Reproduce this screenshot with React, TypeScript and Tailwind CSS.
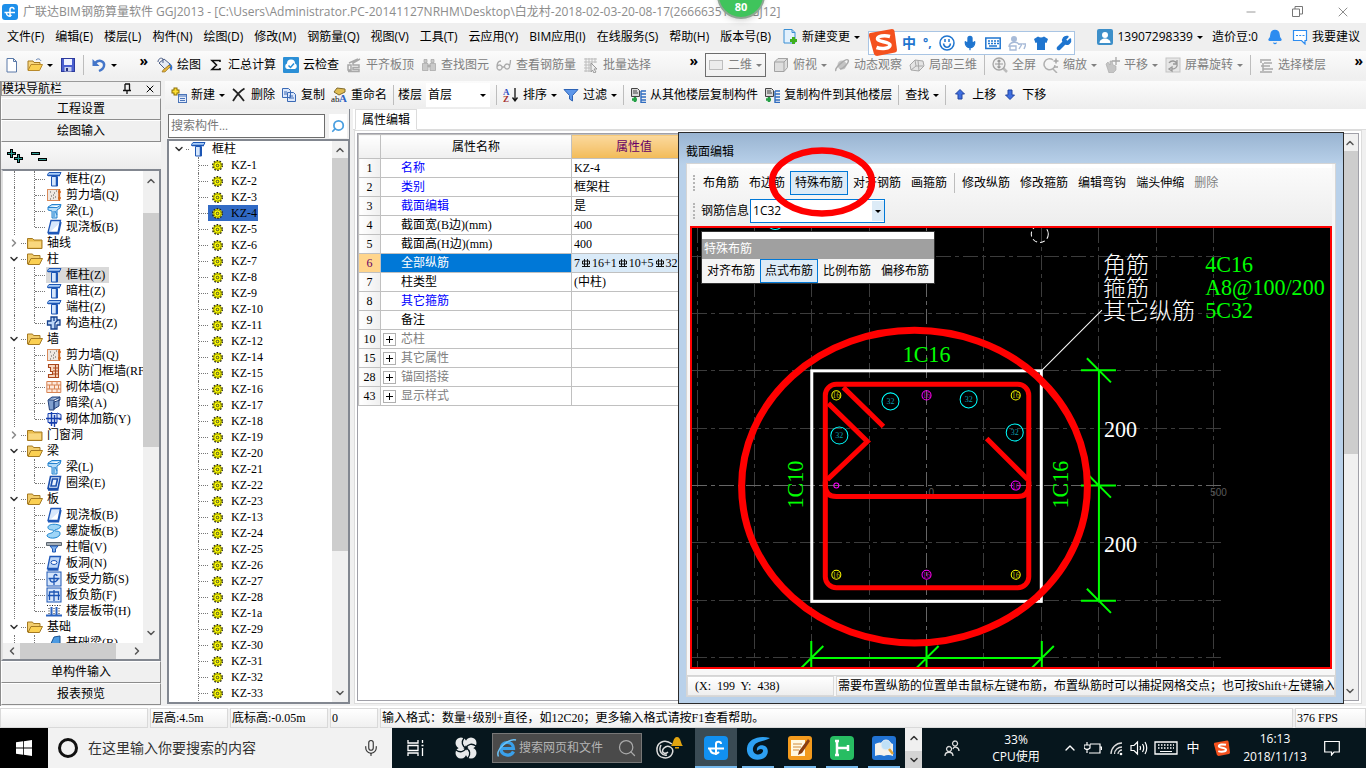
import { useState } from 'react';
import type { ReactNode } from 'react';
import { Bell, ChevronDown, ChevronLeft, ChevronRight, ChevronUp, Mic, Minus, Search, Wrench, X } from 'lucide-react';

const SONG = "font-['Liberation_Serif','Noto_Sans_CJK_SC',serif]";

// 16x16 图标
const icons: Record<string, ReactNode> = {
  logo: (
    <>
      <rect width="16" height="16" rx="3" fill="#1d8fea" />
      <path d="M8 13V5.500a2 2 0 0 1 4 0M2.500 8.500h10.500M4.500 9c0 3 3 4 5 2" fill="none" stroke="#fff" strokeWidth="1.500" />
    </>
  ),
  file: <path d="M3 1.500h6.500l3 3V15H3zM9.500 1.500v3h3" fill="#fff" stroke="#5a79a8" />,
  fileAdd: (
    <>
      <path d="M2 .5h8l3 3V14H2zM10 .5v3h3" fill="#e3f1fd" stroke="#3b8fd4" />
      <path d="M8 11.500h7M11.500 8v7" stroke="#3faf1d" strokeWidth="3" />
    </>
  ),
  open: (
    <>
      <path d="M1 13V4h5l1 1.500h6V8" fill="#f9d77e" stroke="#a57a22" />
      <path d="M1 13.500 4 7.500h11.500l-3 6z" fill="#fbd052" stroke="#b98a2b" />
      <path d="M9 3c2-2 4-1 5 1" fill="none" stroke="#5f7fae" />
    </>
  ),
  save: (
    <>
      <rect x="1.500" y="1.500" width="13" height="13" fill="#4a5fd0" stroke="#2c3a9c" />
      <rect x="4" y="2" width="8" height="6" fill="#eef1ff" />
      <rect x="4.500" y="10" width="7" height="4.500" fill="#c8cfee" />
      <rect x="6" y="11" width="2" height="3" fill="#26327f" />
    </>
  ),
  undo: (
    <>
      <path d="M4 6c5-4.500 10-1 9 3-.5 2.500-2.500 4-5 5" fill="none" stroke="#4476c9" strokeWidth="2.400" />
      <path d="M1.500 2v7h7z" fill="#4476c9" />
    </>
  ),
  paint: (
    <>
      <path d="m2 6 5-4 6 5-5 5z" fill="#e6ebf5" stroke="#4b5d87" />
      <path d="M1 5c0-3 3-5 5-3v4" fill="none" stroke="#4b5d87" />
      <path d="M12 6c4 2 4 5 2 8l-2-4z" fill="#2f6fd0" />
      <path d="m14 9-6 6H5l1-2 6-5z" fill="#e2b13a" stroke="#8c6a1c" strokeWidth=".6" />
    </>
  ),
  sigma: <path d="M12 5V3.500H4l4.500 4.500L4 12.500h8V11" fill="none" stroke="#111" strokeWidth="1.600" />,
  cloud: (
    <>
      <rect width="16" height="16" rx="1" fill="#2b8fd6" />
      <path d="M4 12a3 3 0 0 1 0-5.500 4 4 0 0 1 8 0A3 3 0 0 1 12 12z" fill="#fff" />
      <path d="m5.500 8.500 2 2 3.500-4" fill="none" stroke="#2b8fd6" strokeWidth="1.500" />
    </>
  ),
  align: <path d="M2 14.500h11v-2H7v-2h6V8H7V6l7-4M2 8h3v5H2zM3 6l9-4" fill="none" stroke="#a8a8a8" strokeWidth="1.500" />,
  binocular: (
    <path d="M3 2.500h3v3H3zM10 2.500h3v3h-3zM1.500 6.500h5.500v7H1.500zM9 6.500h5.500v7H9zM7 8h2v2H7z" fill="#c9c9c9" stroke="#a3a3a3" strokeWidth=".7" />
  ),
  glasses: (
    <path d="M11 7a2.500 2.500 0 1 0 .1 0M3.500 8a2.500 2.500 0 1 0 .1 0M1 10c0-4 1-6 4-6M6 10h3M13.500 9c1-3 1-4 1-6" fill="none" stroke="#a9a9a9" strokeWidth="1.300" />
  ),
  batch: (
    <>
      <path d="M1 2h13M1 5h13M1 8h7M1 11h6M1 14h6M3 1v14M6 1v14M9 1v6M12 1v5" stroke="#bdbdbd" />
      <path d="m8 6 6 6-3 0 2 3-2 1-1.500-3L8 15z" fill="#eee" stroke="#999" />
    </>
  ),
  rect: <rect x="1.500" y="3.500" width="13" height="9" fill="#ececec" stroke="#bdbdbd" />,
  cube: (
    <path d="M1.500 5 5 1.500h9.500v9L11 14.500H1.500zM1.500 5H11v9.500M11 5l3.500-3.500" fill="#dedede" stroke="#a3a3a3" />
  ),
  orbit: (
    <>
      <circle cx="8" cy="8" r="4.500" fill="#c4c4c4" />
      <path d="M2 14C0 11 12 1 14 3s-5 9-8 9" fill="none" stroke="#aaa" strokeWidth="1.500" />
    </>
  ),
  box3d: (
    <path d="m1 8 5-5 8 1 1 5-5 5-8-1zM6 3l1 6-5 4M7 9l7 0M9 3.500 10 14" fill="#e4e4e4" stroke="#a8a8a8" />
  ),
  full: (
    <>
      <path d="m11 11 4 4" stroke="#bbb" strokeWidth="2.500" />
      <circle cx="7" cy="7" r="6" fill="#f0f0f0" stroke="#a6a6a6" strokeWidth="1.300" />
      <path d="M7 3v8M3 7h8M5.500 4.500 7 3l1.500 1.500M5.500 9.500 7 11l1.500-1.500" fill="none" stroke="#999" strokeWidth="1.200" />
    </>
  ),
  zoom: (
    <>
      <path d="M10 3a5.500 5.500 0 1 0 2 5M10 12l4 4" fill="none" stroke="#b0b0b0" strokeWidth="1.500" />
      <path d="M10.500 4h5M13 1.500v5M11 10h4" stroke="#a6a6a6" strokeWidth="1.500" />
    </>
  ),
  pan: (
    <>
      <path d="M2 7l2-2 2 3 0-4 2 0 1 4 3 1v4l-3 3H5z" fill="#c4c4c4" stroke="#a8a8a8" strokeWidth=".6" />
      <path d="M12 0v8M8 4h8" stroke="#a6a6a6" strokeWidth="1.300" />
    </>
  ),
  rotate: (
    <>
      <rect x="1" y="1" width="14" height="14" fill="#e6e6e6" stroke="#c3c3c3" />
      <path d="M4 6a4.500 4.500 0 0 1 8 1c1 3-2 5-5 5M12 3v4H8M7 10v4l-3-2z" fill="none" stroke="#999" strokeWidth="1.300" />
    </>
  ),
  floors: <path d="M4 3h9M6 6h8M3 9h9M5 12h10M2 15h12M3 2v4M5 6v8" stroke="#a9a9a9" strokeWidth="1.500" />,
  create: (
    <>
      <path d="M.5 4.500h8M4.500 .5v8" stroke="#8a6d00" strokeWidth="4" />
      <path d="M1.500 4.500h6M4.500 1.500v6" stroke="#ffe034" strokeWidth="2" />
      <rect x="7.500" y="7.500" width="8" height="8" fill="#e4ecfb" stroke="#4a74b8" />
      <path d="M8 9h7M9 11.500h5M9 13.500h5" stroke="#4a74b8" />
    </>
  ),
  del: <path d="M2 2c4 3 8 8 11 12M13.500 1.500C9 4 5 9 2 14" fill="none" stroke="#222" strokeWidth="1.800" />,
  copy: (
    <path d="M1.500 1.500h6l2 2v7h-8zM6.500 5.500h6l2 2v7h-8zM3 5h3M3 7h3M8 9h4M8 11h5" fill="#dbe7fb" stroke="#3a69b4" />
  ),
  rename: (
    <>
      <path d="m3 5 3-4 8 1 0 3-6 3z" fill="#e0bd54" stroke="#806a2c" />
      <text x="0" y="15" fontSize="9" fontFamily="Liberation Serif" fill="#111">ab</text>
      <text x="8" y="15" fontSize="11" fontWeight="bold" fontFamily="Liberation Serif" fill="#2b61c4">A</text>
    </>
  ),
  sort: (
    <>
      <text x="0" y="8" fontSize="9" fontWeight="bold" fontFamily="Liberation Serif" fill="#2b4ec4">A</text>
      <text x="0" y="15" fontSize="9" fontWeight="bold" fontFamily="Liberation Serif" fill="#a5302e">Z</text>
      <path d="M12 1v12M9.500 10.500 12 14l2.500-3.500" fill="none" stroke="#111" strokeWidth="1.300" />
    </>
  ),
  filter: <path d="M1 2.500h14L9.500 8.500V14L6.500 12V8.500z" fill="#5d97ea" stroke="#2d63b5" />,
  copyFloor: (
    <>
      <path d="M1.500 1.500h6l2 2v6h-8zM3 4h4M3 6h5" fill="#d9d9d9" stroke="#444" />
      <path d="M5 10v5M2 12.500h5" stroke="#24a045" strokeWidth="2.500" />
      <path d="M11 4v12M11 4h5M11 7h5M11 10h5M11 13h5M11 15.500h5" stroke="#2f6cc0" strokeWidth="1.400" />
    </>
  ),
  up: <path d="M8 2.500 12.500 7H10v5H6V7H3.500z" fill="#3e6ee0" stroke="#23459f" />,
  down: <path d="M8 12.500 12.500 8H10V3H6v5H3.500z" fill="#3e6ee0" stroke="#23459f" />,
  user: (
    <>
      <rect width="16" height="16" rx="2" fill="#3d8fc9" />
      <circle cx="8" cy="6" r="3" fill="#fff" />
      <path d="M2.500 14c0-6 11-6 11 0z" fill="#fff" />
    </>
  ),
  comment: (
    <path d="M1.500 1.500h13v10H13v3.500l-3.500-3.500h-8zM4 6.500h2M7.200 6.500h2M10.500 6.500h2" fill="#fff" stroke="#2d8cf0" strokeWidth="1.200" />
  ),
  folder: (
    <>
      <path d="M.5 13.500V3.500h5l1.500 1.500h8v8.500z" fill="#e9bc4e" stroke="#a57a22" />
      <path d="M1.500 12.500V6.500h12.500v6z" fill="#f9d77e" />
    </>
  ),
  folderOpen: (
    <>
      <path d="M.5 13V3h5l1 1.500H13V7" fill="#f2cd6c" stroke="#a57a22" />
      <path d="M1 13.500 4 7.500h11.500l-3 6z" fill="#fbd052" stroke="#a57a22" />
    </>
  ),
  column: (
    <>
      <path d="M1.500 3.500 3 1.500h12l-1.500 3h-12z" fill="#a9cdf8" stroke="#1d56b4" />
      <path d="M5.500 5.500h6V15h-6z" fill="#d5e6fc" stroke="#1d56b4" />
      <path d="M10.500 6v9M2 4.500h12" stroke="#1d56b4" strokeWidth="1.500" />
    </>
  ),
  shearWall: (
    <>
      <rect x="1.500" y="2.500" width="11" height="11" fill="#efe8e2" stroke="#d98b5b" />
      <path d="M4 5h1M8 6h1M5 9h1M9 10h1M4 12h1M7 8h1M10 4h1M7 11h1" stroke="#555" />
      <path d="M13.500 2v12M12 5h3M12 11h3" stroke="#d2691e" strokeWidth="1.400" />
    </>
  ),
  beam: (
    <path d="m2 4 4-2.500h9L14 5l-3 2v8H6V8L2 7zM2 4.500h9L15 2M8 8v6M9 8l2 4" fill="#b5dcf8" stroke="#2583cf" />
  ),
  slab: <path d="M5 1.500h9.500L12 13.500H2zM2 14.800h10.500L15 3" fill="#d8e8fc" stroke="#1f58b8" strokeWidth="1.300" />,
  tieColumn: (
    <path d="M5 2h6v3h3v5h-3v4H5v-4H1.500V6H5zM8 2v4M12 5l-3 3v6" fill="#bcd6f7" stroke="#15408c" strokeWidth="1.300" />
  ),
  doorWall: (
    <path d="M2.500 1.500h10v13h-10v-3h4v-3h-2v-4h-2zM9.500 2v12M7 5h5M7 8h5M7 11h5" fill="#f8d7bd" stroke="#a9461b" strokeWidth="1.100" />
  ),
  brick: (
    <path d="M.8 2.500h14v11H.8zM1 6h14M1 10h14M6 2.500V6M11 2.500V6M3.500 6v4M8.500 6v4M12.500 6v4M6 10v3.500M11 10v3.500" fill="#fde9dc" stroke="#d78454" />
  ),
  hiddenBeam: <path d="m2 5 4-3h8v3L8 7v8H3.500zM3 5h5l6-3M8 5v9l5-3V4" fill="#7f9fce" stroke="#22407a" />,
  masonry: (
    <>
      <path d="M2 2.500h9v9H2zM11 2l4 1.500V9L11 7" fill="#dfe9fb" stroke="#163fae" />
      <path d="M0 7.500h15M5.500 1v14M8.500 4v12M3 12h8" stroke="#163fae" strokeWidth="1.400" />
    </>
  ),
  ringBeam: (
    <path d="M4.500 1.500h10L12 13.500H2zM6.500 4h5l-1.500 7H5zM2 15h10.500" fill="#e8f1fd" stroke="#1b4fad" strokeWidth="1.600" />
  ),
  spiral: (
    <path d="M15 3C10 0 1 1 2 5c1 3 8 1 5 4-2 2-6 1-6 4 3 4 14 2 13-3 0-3-7-1-5-3 2-1 5-1 6-4z" fill="#9ed5f7" stroke="#1e86cf" />
  ),
  cap: (
    <>
      <path d="M.5 3.500h15v3H.5z" fill="#a7b1ba" stroke="#5c6670" />
      <path d="M4 7h8l-2.500 3v3h-3v-3z" fill="#7fb0ea" stroke="#1d56b4" />
    </>
  ),
  hole: (
    <>
      <path d="M4 1.500h10.500L12 13.500H1.500zM1.500 15h11" fill="#bcd6f7" stroke="#1f58b8" strokeWidth="1.300" />
      <ellipse cx="8" cy="7.500" rx="3" ry="2" fill="#fff" stroke="#1f58b8" />
    </>
  ),
  rebar: (
    <>
      <rect x="1" y="1" width="14" height="14" fill="#d6e6fb" stroke="#1d56b4" />
      <path d="M8 14V5c0-2 3-2 3 0M2.500 7.500h11M4 8c0 4 6 4 8 0" fill="none" stroke="#1d56b4" strokeWidth="1.300" />
    </>
  ),
  negRebar: (
    <>
      <rect x="1" y="1" width="14" height="14" fill="#d6e6fb" stroke="#1d56b4" />
      <path d="M8 3v11M2 8.500h12M3.500 13V5h9v8" fill="none" stroke="#1d56b4" strokeWidth="1.300" />
    </>
  ),
  band: (
    <>
      <path d="M1 2.500h14M3 5v6M8 5v6M13 5v6" stroke="#222" strokeDasharray="1 1.500" />
      <path d="M0 12.500h16M5.500 4v9M10.500 4v9" stroke="#2a63c0" strokeWidth="2" />
    </>
  ),
  foundation: <path d="m2 15 6-13 6-1v7l-6 5z" fill="#4b9ae2" stroke="#175190" />,
};

function Icon({ name, className = 'size-4' }: { name: string; className?: string }) {
  return (
    <svg viewBox="0 0 16 16" className={`shrink-0 ${className}`} aria-hidden="true">
      {icons[name]}
    </svg>
  );
}

function Caret() {
  return <span className="shrink-0 border-x-3 border-t-3 border-x-transparent border-t-current" />;
}

function Sep() {
  return <span className="h-5 w-px shrink-0 bg-[#bdbdbd]" />;
}

interface ToolProps {
  icon?: string;
  label?: string;
  title?: string;
  caret?: boolean;
  muted?: boolean;
}

function Tool({ icon, label, title, caret, muted }: ToolProps) {
  return (
    <button
      type="button"
      aria-label={title}
      className={`flex shrink-0 items-center gap-1 whitespace-nowrap ${muted ? 'text-[#808080]' : 'text-black'}`}
    >
      {icon && <Icon name={icon} />}
      {label}
      {caret && <Caret />}
    </button>
  );
}

const menus = [
  '文件(F)', '编辑(E)', '楼层(L)', '构件(N)', '绘图(D)', '修改(M)', '钢筋量(Q)', '视图(V)',
  '工具(T)', '云应用(Y)', 'BIM应用(I)', '在线服务(S)', '帮助(H)', '版本号(B)',
];

function SogouLogo({ className }: { className: string }) {
  return (
    <svg viewBox="0 0 28 28" className={className} aria-hidden="true">
      <path d="M1 5 23 1q2 0 2.500 2L28 22q0 2-2 2.500L8 28q-2 0-3-2L0 8q-.5-2 1-3z" fill="#f4511e" />
      <path d="M21 8.500C15 7 8.500 8 8.500 11s12.500 2.500 12.500 6-8 4.500-13.500 2.500" fill="none" stroke="#fff" strokeWidth="3.600" />
    </svg>
  );
}

function TitleBar() {
  return (
    <header className="relative flex h-[23px] shrink-0 items-center bg-white pl-[2px] text-[#8c8c8c]">
      <Icon name="logo" />
      <h1 className="ml-[5px] flex-1 whitespace-nowrap text-xs">
        广联达BIM钢筋算量软件 GGJ2013 - [C:\Users\Administrator.PC-20141127NRHM\Desktop\白龙村-2018-02-03-20-08-17(266663512).GGJ12]
      </h1>
      <button type="button" aria-label="最小化" className="w-[46px]"><Minus className="mx-auto size-3.5" strokeWidth={1.5} /></button>
      <button type="button" aria-label="还原" className="w-[46px]">
        <svg viewBox="0 0 11 11" className="mx-auto size-[11px]"><path d="M.5 3h7v7.500h-7zM3 3V.5h7.500V8h-3" fill="none" stroke="#777" /></svg>
      </button>
      <button type="button" aria-label="关闭" className="w-[46px]"><X className="mx-auto size-4" strokeWidth={1.5} /></button>
      <div className="absolute -top-[29px] left-[717px] z-10 flex size-12 items-end justify-center rounded-full border-2 border-[#8fa694] bg-[#3fc45c] pb-[2px] text-[11px] font-bold text-white shadow-md">
        80
      </div>
    </header>
  );
}

function MenuBar() {
  return (
    <div className="relative flex h-7 shrink-0 items-center justify-between bg-[#efefef] pr-[6px] pl-[7px]">
      <nav className="flex items-center gap-[11px] whitespace-nowrap">
        {menus.map((m) => (
          <button key={m} type="button">{m}</button>
        ))}
        <Tool icon="fileAdd" label="新建变更" caret />
      </nav>
      {/* 输入法浮动条 */}
      <div className="absolute top-[8px] left-[868px] z-10 flex h-6 w-[207px] items-center gap-[7px] border border-[#a9c5e4] bg-white pl-[33px] text-[#1f75cf]">
        <SogouLogo className="absolute -top-[4px] left-0 size-7" />
        <span className="text-sm font-bold">中</span>
        <span className="font-bold">°,</span>
        <svg viewBox="0 0 16 16" className="size-4" aria-hidden="true">
          <circle cx="8" cy="8" r="7" fill="none" stroke="currentColor" strokeWidth="1.500" />
          <path d="M4.500 8.500c1 5 6 5 7 0M6 4v3M10 4v3" fill="none" stroke="currentColor" strokeWidth="1.500" />
        </svg>
        <Mic className="size-4" fill="currentColor" />
        <svg viewBox="0 0 16 16" className="size-4" aria-hidden="true">
          <path d="M.8 3h14.400v10.500H.8zM3 6h2M6 6h2M9 6h2M12 6h2M3 8.500h2M6 8.500h2M9 8.500h2M12 8.500h2M4 11h8" fill="none" stroke="currentColor" strokeWidth="1.500" />
        </svg>
        <svg viewBox="0 0 18 16" className="h-4 w-[18px] text-[#a8bbd8]" aria-hidden="true">
          <circle cx="6" cy="4" r="3" fill="currentColor" />
          <path d="M1 12c0-6 10-6 10-2M2 11h6v4H2zM10 9h4l-3 5M15 9h3l-2 5" fill="none" stroke="currentColor" strokeWidth="1.400" />
        </svg>
        <svg viewBox="0 0 16 16" className="size-4" aria-hidden="true">
          <path d="m1 4 4-2.500q3 2 6 0L15 4l-1.500 4L12 7.500V15H4V7.500L2.500 8z" fill="currentColor" />
        </svg>
        <Wrench className="size-4" fill="currentColor" />
      </div>
      <div className="flex items-center gap-[9px] whitespace-nowrap">
        <Tool icon="user" label="13907298339" caret />
        <span>造价豆:0</span>
        <Bell className="size-4 text-[#2d8cf0]" fill="currentColor" />
        <Tool icon="comment" label="我要建议" />
      </div>
    </div>
  );
}

function MainToolbar() {
  return (
    <div className="mb-[2px] flex h-7 shrink-0 items-center overflow-hidden bg-linear-to-b from-[#fbfbfb] to-[#efefef]">
      <div className="flex w-[157px] shrink-0 items-center gap-[7px] pl-1">
        <Tool icon="file" title="新建" />
        <Tool icon="open" title="打开" caret />
        <Tool icon="save" title="保存" />
        <Sep />
        <Tool icon="undo" title="撤销" caret />
        <span className="ml-auto pr-[9px] pb-2 text-sm font-bold">»</span>
      </div>
      <div className="flex w-[548px] shrink-0 items-center gap-[7px]">
        <Tool icon="paint" label="绘图" />
        <Tool icon="sigma" label="汇总计算" />
        <Tool icon="cloud" label="云检查" />
        <Tool icon="align" label="平齐板顶" muted />
        <Tool icon="binocular" label="查找图元" muted />
        <Tool icon="glasses" label="查看钢筋量" muted />
        <Tool icon="batch" label="批量选择" muted />
        <span className="ml-auto pr-[7px] pb-2 text-sm font-bold">»</span>
      </div>
      <div className="flex flex-1 items-center gap-[7px]">
        <div className="flex h-6 w-[61px] items-center gap-1 border border-[#6d6d6d] pl-[2px] text-[#808080]">
          <Icon name="rect" />
          <select aria-label="视图模式" className="w-6 appearance-none text-[#808080]">
            <option>二维</option>
          </select>
          <Caret />
        </div>
        <Tool icon="cube" label="俯视" caret muted />
        <Tool icon="orbit" label="动态观察" muted />
        <Tool icon="box3d" label="局部三维" muted />
        <Sep />
        <Tool icon="full" label="全屏" muted />
        <Tool icon="zoom" label="缩放" caret muted />
        <Tool icon="pan" label="平移" caret muted />
        <Tool icon="rotate" label="屏幕旋转" caret muted />
        <Sep />
        <Tool icon="floors" label="选择楼层" muted />
        <span className="ml-auto pr-[3px] pb-2 text-sm font-bold">»</span>
      </div>
    </div>
  );
}

function ComponentToolbar() {
  return (
    <div className="flex h-7 shrink-0 items-center gap-[6px] overflow-hidden bg-linear-to-b from-[#fbfbfb] to-[#ededed] pl-[6px]">
      <Tool icon="create" label="新建" caret />
      <Tool icon="del" label="删除" />
      <Tool icon="copy" label="复制" />
      <Tool icon="rename" label="重命名" />
      <span className="flex items-center gap-1">
        <Sep />
        <label htmlFor="floor">楼层</label>
        <span className="flex items-center bg-white pr-1">
          <select id="floor" className="h-6 w-[54px] appearance-none pl-[2px]">
            <option>首层</option>
          </select>
          <Caret />
        </span>
      </span>
      <Sep />
      <Tool icon="sort" label="排序" caret />
      <Tool icon="filter" label="过滤" caret />
      <Sep />
      <Tool icon="copyFloor" label="从其他楼层复制构件" />
      <Tool icon="copyFloor" label="复制构件到其他楼层" />
      <Sep />
      <Tool label="查找" caret />
      <Sep />
      <Tool icon="up" label="上移" />
      <Tool icon="down" label="下移" />
    </div>
  );
}

interface NavGroup {
  label?: string;
  closed?: boolean;
  items: [string, string][];
}

const navGroups: NavGroup[] = [
  { items: [['column', '框柱(Z)'], ['shearWall', '剪力墙(Q)'], ['beam', '梁(L)'], ['slab', '现浇板(B)']] },
  { label: '轴线', closed: true, items: [] },
  { label: '柱', items: [['column', '框柱(Z)'], ['column', '暗柱(Z)'], ['column', '端柱(Z)'], ['tieColumn', '构造柱(Z)']] },
  {
    label: '墙',
    items: [
      ['shearWall', '剪力墙(Q)'], ['doorWall', '人防门框墙(RF)'], ['brick', '砌体墙(Q)'],
      ['hiddenBeam', '暗梁(A)'], ['masonry', '砌体加筋(Y)'],
    ],
  },
  { label: '门窗洞', closed: true, items: [] },
  { label: '梁', items: [['beam', '梁(L)'], ['ringBeam', '圈梁(E)']] },
  {
    label: '板',
    items: [
      ['slab', '现浇板(B)'], ['spiral', '螺旋板(B)'], ['cap', '柱帽(V)'], ['hole', '板洞(N)'],
      ['rebar', '板受力筋(S)'], ['negRebar', '板负筋(F)'], ['band', '楼层板带(H)'],
    ],
  },
  { label: '基础', items: [['foundation', '基础梁(B)']] },
];

function NavButton({ children }: { children: ReactNode }) {
  return (
    <button type="button" className="h-[22px] w-full shrink-0 border border-t-white border-r-[#8c8c8c] border-b-[#8c8c8c] border-l-white bg-[#f0f0f0]">
      {children}
    </button>
  );
}

function NavPanel() {
  return (
    <aside className={`flex w-[161px] shrink-0 flex-col border-l border-[#8c8c8c] bg-[#f0f0f0] pb-px ${SONG}`}>
      <div className="mb-[2px] flex h-[15px] shrink-0 items-center border border-[#9a9a9a]">
        <span className="flex-1">模块导航栏</span>
        <svg viewBox="0 0 10 12" className="mr-3 h-3 w-[10px]" aria-hidden="true">
          <path d="M3 1h5M3 1v6M7.500 1v6M1 7.500h8M5 7v4" fill="none" stroke="#111" strokeWidth="1.300" />
        </svg>
        <X className="mr-1 size-3" strokeWidth={2} />
      </div>
      <NavButton>工程设置</NavButton>
      <NavButton>绘图输入</NavButton>
      <div className="flex h-[27px] shrink-0 items-center gap-2 bg-linear-to-b from-[#fafafa] to-[#ececec] pl-[6px]">
        <svg viewBox="0 0 16 16" className="size-4" aria-hidden="true">
          <path d="M0 5.500h9M4.500 1v9M7 10.500h9M11.500 6v9" stroke="#000" strokeWidth="3" />
          <path d="M1 5.500h7M4.500 2v7M8 10.500h7M11.500 7v7" stroke="#2e9c93" />
        </svg>
        <svg viewBox="0 0 16 16" className="size-4" aria-hidden="true">
          <path d="M0 5.500h9M7 11.500h9" stroke="#000" strokeWidth="3" />
          <path d="M1 5.500h7M8 11.500h7" stroke="#2e9c93" />
        </svg>
      </div>
      <div className="flex min-h-0 flex-1 flex-col border-2 border-t-[#828790] border-r-[#828790] border-b-[#828790] border-l-[#e0e0e0] bg-white">
        <div className="flex min-h-0 flex-1 overflow-hidden">
          <div className="min-w-0 flex-1 overflow-hidden whitespace-nowrap">
            {navGroups.map((g, gi) => (
              <div key={gi}>
                {g.label && (
                  <div className="flex h-4 items-center">
                    <span className="flex w-[17px] justify-end">
                      {g.closed ? <ChevronRight className="size-3 text-[#8a8a8a]" strokeWidth={3} /> : <ChevronDown className="size-3 text-[#333]" strokeWidth={3} />}
                    </span>
                    <span className="mx-px w-[5px] border-t border-dotted border-[#777]" />
                    <Icon name={g.closed ? 'folder' : 'folderOpen'} />
                    <span className="ml-1">{g.label}</span>
                  </div>
                )}
                {g.items.map(([icon, label], i) => (
                  <div key={label} className="flex h-4 items-center">
                    <span className="h-4 w-3 shrink-0 border-r border-dotted border-[#777]" />
                    <span className={`w-5 shrink-0 self-start border-r border-dotted border-[#777] ${i === g.items.length - 1 ? 'h-2' : 'h-4'}`} />
                    <span className="mr-px w-[10px] shrink-0 border-t border-dotted border-[#777]" />
                    <span className={`flex h-4 shrink-0 items-center gap-1 ${gi === 2 && i === 0 ? 'bg-[#d9d9d9] pr-1' : ''}`}>
                      <Icon name={icon} />
                      {label}
                    </span>
                  </div>
                ))}
              </div>
            ))}
          </div>
          <div className="flex w-4 shrink-0 flex-col items-center bg-[#f0f0f0] py-1">
            <ChevronUp className="size-3 shrink-0 text-[#555]" strokeWidth={3} />
            <div className="mt-[26px] h-[234px] w-full shrink-0 bg-[#cdcdcd]" />
            <ChevronDown className="mt-auto size-3 shrink-0 text-[#555]" strokeWidth={3} />
          </div>
        </div>
        <div className="flex h-4 shrink-0 items-center bg-[#f0f0f0] pr-4 pl-[3px]">
          <ChevronLeft className="size-3 shrink-0 text-[#555]" strokeWidth={3} />
          <div className="mx-[2px] h-4 w-[96px] bg-[#cdcdcd]" />
          <ChevronRight className="ml-auto size-3 shrink-0 text-[#555]" strokeWidth={3} />
        </div>
      </div>
      <NavButton>单构件输入</NavButton>
      <NavButton>报表预览</NavButton>
    </aside>
  );
}

const components = [
  '1', '2', '3', '4', '5', '6', '7', '8', '9', '10', '11', '12', '14', '15', '16', '17', '18', '19', '20',
  '21', '22', '23', '13', '24', '25', '26', '27', '28', '1a', '29', '30', '31', '32', '33',
].map((n) => `KZ-${n}`);

function Gear() {
  return (
    <svg viewBox="0 0 11 11" className="size-[11px]" aria-hidden="true">
      <circle cx="5.500" cy="5.500" r="4.800" fill="#ffff00" stroke="#222" strokeWidth="1.400" strokeDasharray="1.600 1.415" />
      <circle cx="5.500" cy="5.500" r="3.600" fill="#ffff00" stroke="#5e5e00" strokeWidth=".6" />
      <circle cx="5.500" cy="5.500" r="1.300" fill="#ffff00" stroke="#333" strokeWidth=".9" />
    </svg>
  );
}

function ComponentTree() {
  const [selected, setSelected] = useState('KZ-4');

  return (
    <section className={`flex w-[185px] shrink-0 flex-col pb-[2px] ${SONG}`}>
      <div className="flex h-[30px] shrink-0 items-end border-r border-[#828790] pb-px pl-[3px]">
        <input
          type="text"
          aria-label="搜索构件"
          placeholder="搜索构件..."
          className="h-6 w-[157px] border border-[#6d6d6d] bg-white px-[2px] placeholder:text-[#777]"
        />
        <button type="button" aria-label="搜索" className="ml-1 flex h-6 w-[18px] items-center justify-center bg-white">
          <Search className="size-3.5 -scale-x-100 text-[#4a9fe0]" strokeWidth={3} />
        </button>
      </div>
      <div className="ml-[2px] flex min-h-0 flex-1 border-2 border-[#828790] bg-white">
        <div className="flex-1 overflow-hidden">
          <div className="flex h-4 items-center pl-1">
            <ChevronDown className="size-3 text-[#333]" strokeWidth={3} />
            <span className="mx-px w-[3px] border-t border-dotted border-[#777]" />
            <Icon name="column" />
            <span className="ml-[6px]">框柱</span>
          </div>
          {components.map((name) => (
            <div key={name} className="flex h-4 items-center pl-[29px]">
              <span className="h-4 w-px border-l border-dotted border-[#777]" />
              <span className="w-[9px] border-t border-dotted border-[#777]" />
              <button
                type="button"
                onClick={() => setSelected(name)}
                className={`flex h-4 items-center gap-2 pr-px pl-1 ${selected === name ? 'bg-[#316ac5]' : ''}`}
              >
                <Gear />
                {name}
              </button>
            </div>
          ))}
        </div>
        <div className="flex w-4 flex-col items-center bg-[#f0f0f0] py-[3px]">
          <ChevronUp className="size-3 shrink-0 text-[#555]" strokeWidth={3} />
          <div className="mt-[2px] h-[393px] w-full shrink-0 bg-[#cdcdcd]" />
          <ChevronDown className="mt-auto size-3 shrink-0 text-[#555]" strokeWidth={3} />
        </div>
      </div>
    </section>
  );
}

// HRB400 钢筋符号
function RebarSign() {
  return (
    <svg viewBox="0 0 12 12" className="inline-block size-3 align-[-2px]" role="img" aria-label="C">
      <path d="M4.500 2v7M7.500 2v7M2.500 4h7v3h-7zM2 9.500h8" fill="none" stroke="#111" />
    </svg>
  );
}

interface Property {
  no: number;
  name: string;
  value?: ReactNode;
  kind?: 'key' | 'group' | 'active';
}

const properties: Property[] = [
  { no: 1, name: '名称', value: 'KZ-4', kind: 'key' },
  { no: 2, name: '类别', value: '框架柱', kind: 'key' },
  { no: 3, name: '截面编辑', value: '是', kind: 'key' },
  { no: 4, name: '截面宽(B边)(mm)', value: '400' },
  { no: 5, name: '截面高(H边)(mm)', value: '400' },
  { no: 6, name: '全部纵筋', value: <>7<RebarSign />16+1<RebarSign />10+5<RebarSign />32</>, kind: 'active' },
  { no: 7, name: '柱类型', value: '(中柱)' },
  { no: 8, name: '其它箍筋', kind: 'key' },
  { no: 9, name: '备注' },
  { no: 10, name: '芯柱', kind: 'group' },
  { no: 15, name: '其它属性', kind: 'group' },
  { no: 28, name: '锚固搭接', kind: 'group' },
  { no: 43, name: '显示样式', kind: 'group' },
];

const nameStyles = {
  key: 'text-[#0000ff]',
  group: 'text-[#808080]',
  active: 'bg-[#0078d7] text-white',
};

function PropertyTable() {
  return (
    <div className={`flex-1 overflow-hidden ${SONG}`}>
      <table className="w-full table-fixed border-collapse">
        <thead>
          <tr className="h-6">
            <th className="w-[22px] border border-[#c0c0c0] bg-linear-to-b from-white to-[#efefef]" />
            <th className="w-[191px] border border-[#c0c0c0] bg-linear-to-b from-white to-[#efefef] font-normal">属性名称</th>
            <th className="border border-[#c0c0c0] bg-linear-to-b from-[#fbd99d] to-[#f2bb57] pl-[44px] text-left font-normal text-[#660066]">
              属性值
            </th>
          </tr>
        </thead>
        <tbody>
          {properties.map((p) => (
            <tr key={p.no} className="h-[19px] leading-4">
              <td className={`border border-[#c0c0c0] text-center ${p.kind === 'active' ? 'bg-[#ffd58c] text-[#660066]' : 'bg-linear-to-r from-white to-[#efefef]'}`}>
                {p.no}
              </td>
              <td className={`border border-[#c0c0c0] ${p.kind ? nameStyles[p.kind] : ''}`}>
                <span className="flex items-center">
                  <span className="flex w-5 shrink-0 pl-[2px]">
                    {p.kind === 'group' && (
                      <button type="button" aria-label={`展开${p.name}`} className="flex size-[13px] items-center justify-center border border-[#b0b0b0] text-black">
                        <svg viewBox="0 0 7 7" className="size-[7px]"><path d="M0 3.500h7M3.500 0v7" stroke="#000" /></svg>
                      </button>
                    )}
                  </span>
                  {p.name}
                </span>
              </td>
              <td className={`border border-[#c0c0c0] pl-[2px] ${p.kind === 'active' ? 'bg-[#d9eaf8]' : ''}`}>{p.value}</td>
            </tr>
          ))}
        </tbody>
      </table>
    </div>
  );
}

const GRID_X = [-229, -172, -115, -57, 57, 115, 172, 229, 286];
const GRID_Y = [-229, -172, -115, -57, 57, 115, 172];
const DIM = [-115, 0, 115];

const smallBars: [number, number, string][] = [
  [-90, -90, '#ffff00'], [89, -90, '#ffff00'], [-90, 89, '#ffff00'], [89, 89, '#ffff00'],
  [0, -90, '#ff00ff'], [0, 89, '#ff00ff'], [89, 0, '#ff00ff'],
];
const bigBars = [[-36, -84], [42, -86], [-87, -50], [88, -53], [-151, -264]];

// 截面图，原点取柱截面中心
function SectionDrawing() {
  return (
    <svg viewBox="-234 -257 637 438" preserveAspectRatio="xMinYMin slice" className="absolute inset-0 size-full" fontFamily="Liberation Serif, Noto Sans CJK SC, serif">
      <g stroke="#3c3c3c" strokeDasharray="15 4 4 4" shapeRendering="crispEdges">
        {GRID_X.map((x) => <line key={x} x1={x} x2={x} y1="-257" y2="181" />)}
        {GRID_Y.map((y) => <line key={y} x1="-234" x2="296" y1={y} y2={y} />)}
        <path d="M0-257V181M-234 0H296" stroke="#666" />
      </g>
      <g fill="#5a5a5a" fontSize="10" fontFamily="Liberation Sans">
        <text x="2" y="10">0</text>
        <text x="283" y="10">500</text>
      </g>

      <circle cx="113" cy="-251" r="8.500" fill="none" stroke="#fff" strokeDasharray="5 3" />
      <rect x="-114.500" y="-114.500" width="229" height="230" fill="none" stroke="#fff" strokeWidth="3" />
      <path d="M115-115 175-175" stroke="#fff" />

      {smallBars.map(([x, y, color]) => (
        <g key={`${x},${y}`}>
          <circle cx={x} cy={y} r="4.500" fill="none" stroke={color} />
          <text x={x} y={y + 3} textAnchor="middle" fontSize="8" fill={color} opacity=".7">16</text>
        </g>
      ))}
      <circle cx="-90" cy="0" r="2.500" fill="none" stroke="#ff00ff" />
      {bigBars.map(([x, y]) => (
        <g key={`${x},${y}`}>
          <circle cx={x} cy={y} r="8.500" fill="none" stroke="#00ffff" />
          <text x={x} y={y + 3} textAnchor="middle" fontSize="8" fill="#0a9aaa">32</text>
        </g>
      ))}

      {/* 箍筋 */}
      <g fill="none" stroke="#ff0000" strokeWidth="5">
        <rect x="-101" y="-101" width="203" height="203" rx="11" />
        <path d="M-101-4V0q0 11 11 11H91q11 0 11-11V-4" />
        <path d="M-83-98-43-59M-98-82-59-44-99-6M60-47 101-6" />
      </g>

      {/* 尺寸线 */}
      <g stroke="#00ff00" strokeWidth="2">
        <path d="M172-115V115M-115 172H115" />
        {DIM.map((d) => (
          <g key={d}>
            <path d={`M154 ${d}h35M160 ${d - 12}l24 24`} />
            <path d={`M${d} 155v26M${d + 12} 160l-24 24`} />
          </g>
        ))}
      </g>

      <ellipse cx="-12" cy="1" rx="172.500" ry="156" fill="none" stroke="#ff0000" strokeWidth="7" />

      <g fontSize="22" fill="#00ff00">
        <text x="0" y="-123" textAnchor="middle">1C16</text>
        <text transform="translate(-123 -1) rotate(-90)" textAnchor="middle">1C10</text>
        <text transform="translate(141 -1) rotate(-90)" textAnchor="middle">1C16</text>
        <text x="278" y="-213">4C16</text>
        <text x="278" y="-190">A8@100/200</text>
        <text x="278" y="-167">5C32</text>
      </g>
      <g fill="#fff">
        <text x="177" y="-48" fontSize="22">200</text>
        <text x="177" y="66" fontSize="22">200</text>
        <g fontSize="23" fontWeight="300">
          <text x="176" y="-212">角筋</text>
          <text x="176" y="-189">箍筋</text>
          <text x="176" y="-166">其它纵筋</text>
        </g>
      </g>
    </svg>
  );
}

function Grip() {
  return <span className="h-4 w-[3px] shrink-0 border-l-2 border-dotted border-[#b5b5b5]" />;
}

function SmallButton({ label, active, muted }: { label: string; active?: boolean; muted?: boolean }) {
  return (
    <button
      type="button"
      className={`h-6 shrink-0 border px-1 whitespace-nowrap ${active ? 'border-[#0078d7] bg-[#dcebf7]' : 'border-transparent'} ${muted ? 'text-[#808080]' : ''}`}
    >
      {label}
    </button>
  );
}

function SectionDialog() {
  return (
    <div
      role="dialog"
      aria-label="截面编辑"
      className="absolute top-[23px] right-[22px] bottom-[2px] left-[325px] flex flex-col border border-[#2b2b2b] bg-linear-to-b from-[#99b4d1] to-[#b9d1ea] to-[32px] px-[7px] pb-[6px]"
    >
      <h2 className="flex h-[30px] shrink-0 items-end pb-[3px]">截面编辑</h2>
      <div className="flex min-h-0 flex-1 flex-col border border-[#d5d5d5] bg-[#f7f7f7] px-[3px]">
        <div className="relative shrink-0 border-t-4 border-white bg-linear-to-b from-[#fbfbfb] to-[#ededed] pb-[2px]">
          <div className="flex h-[30px] items-center gap-[2px] pl-[3px]">
            <Grip />
            <div className="flex items-center">
              <SmallButton label="布角筋" />
              <SmallButton label="布边筋" />
              <SmallButton label="特殊布筋" active />
              <SmallButton label="对齐钢筋" />
              <SmallButton label="画箍筋" />
            </div>
            <Sep />
            <div className="flex items-center">
              <SmallButton label="修改纵筋" />
              <SmallButton label="修改箍筋" />
              <SmallButton label="编辑弯钩" />
              <SmallButton label="端头伸缩" />
              <SmallButton label="删除" muted />
            </div>
          </div>
          <div className="flex h-[26px] items-center pl-[3px]">
            <Grip />
            <label htmlFor="bar" className="mr-px ml-[5px]">钢筋信息</label>
            <span className="flex h-6 w-[135px] items-center border border-[#0078d7] bg-white">
              <input id="bar" type="text" defaultValue="1C32" className="w-0 flex-1 pl-[2px] outline-none" />
              <button type="button" aria-label="选择钢筋" className="flex h-5 w-3 items-center justify-center bg-[#dcebf7]">
                <Caret />
              </button>
            </span>
          </div>
          <svg viewBox="0 0 108 72" className="pointer-events-none absolute -top-[22px] left-[78px] z-10 h-[72px] w-[108px]" aria-hidden="true">
            <ellipse cx="54" cy="36" rx="50" ry="31.500" fill="none" stroke="#ff0000" strokeWidth="6.500" />
          </svg>
        </div>
        <div className="relative flex-1 overflow-hidden border-2 border-[#ff0000] bg-black">
          <SectionDrawing />
          <div className="absolute top-[3px] left-[9px] border border-[#333] bg-[#f5f5f5]">
            <div className="h-[7px] bg-white" />
            <div className="h-5 bg-[#a0a0a0] pl-[2px] leading-5 text-white">特殊布筋</div>
            <div className="flex">
              <SmallButton label="对齐布筋" />
              <SmallButton label="点式布筋" active />
              <SmallButton label="比例布筋" />
              <SmallButton label="偏移布筋" />
            </div>
          </div>
        </div>
        <div className={`-mx-[3px] mt-[6px] flex h-[21px] shrink-0 gap-[2px] overflow-hidden border-t border-[#d5d5d5] ${SONG}`}>
          <span className="flex w-[147px] shrink-0 items-center border border-[#d9d9d9] bg-linear-to-b from-white to-[#eee] pl-[7px] whitespace-pre">(X:  199  Y:  438)</span>
          <span className="min-w-0 flex-1 overflow-hidden border border-[#d9d9d9] bg-linear-to-b from-white to-[#eee] pl-px leading-[18px] whitespace-nowrap">
            需要布置纵筋的位置单击鼠标左键布筋，布置纵筋时可以捕捉网格交点；也可按Shift+左键输入偏移值
          </span>
        </div>
      </div>
    </div>
  );
}

function PropertyPane() {
  return (
    <main className="relative ml-[3px] flex min-w-0 flex-1 flex-col pb-[2px]">
      <div className="flex h-[21px] shrink-0 border-b border-[#dcdcdc] bg-white">
        <button type="button" className="ml-[2px] h-[21px] border border-b-white border-[#dcdcdc] bg-white px-[6px]">属性编辑</button>
      </div>
      <div className="mr-1 ml-px flex min-h-0 flex-1 border border-[#dcdcdc] bg-white p-[2px]">
        <div className="flex flex-1 border border-[#a0a0a8]">
          <PropertyTable />
          <div className="flex w-4 flex-col items-center bg-[#f0f0f0] py-[3px]">
            <ChevronUp className="size-3 shrink-0 text-[#555]" strokeWidth={3} />
            <div className="mt-[2px] h-[303px] w-full shrink-0 bg-[#cdcdcd]" />
            <ChevronDown className="mt-auto size-3 shrink-0 text-[#555]" strokeWidth={3} />
          </div>
        </div>
      </div>
      <SectionDialog />
    </main>
  );
}

function StatusBar() {
  const cell = 'flex items-center border border-[#d9d9d9] bg-linear-to-b from-white to-[#f0f0f0] pl-px whitespace-nowrap';

  return (
    <footer className={`flex h-[22px] shrink-0 gap-[2px] border-t-2 border-white bg-[#f0f0f0] ${SONG}`}>
      <span className={`w-[148px] shrink-0 ${cell}`} />
      <span className={`w-[78px] shrink-0 ${cell}`}>层高:4.5m</span>
      <span className={`w-[98px] shrink-0 ${cell}`}>底标高:-0.05m</span>
      <span className={`w-[48px] shrink-0 ${cell}`}>0</span>
      <span className={`flex-1 ${cell}`}>输入格式：数量+级别+直径，如12C20；更多输入格式请按F1查看帮助。</span>
      <span className={`w-[71px] shrink-0 ${cell}`}>376 FPS</span>
    </footer>
  );
}

function TaskIcon({ label, active, children }: { label: string; active?: boolean; children: ReactNode }) {
  return (
    <button
      type="button"
      aria-label={label}
      className={`flex h-full w-[42px] shrink-0 flex-col items-center justify-end ${active ? 'bg-[#3a4b54]' : ''}`}
    >
      <svg viewBox="0 0 24 24" className="mb-[6px] size-6">{children}</svg>
      <span className={`h-[2px] bg-[#76b9ed] ${active ? 'w-full' : 'w-8'}`} />
    </button>
  );
}

function Taskbar() {
  return (
    <div className="flex h-10 shrink-0 items-stretch bg-[#06161d] text-white">
      <button type="button" aria-label="开始" className="flex w-12 shrink-0 items-center justify-center bg-black">
        <svg viewBox="0 0 16 16" className="size-4"><path d="M0 2.300 7 1.300v6.300H0zM7.800 1.200 16 0v7.600H7.800zM0 8.400h7v6.300L0 13.700zM7.800 8.400H16V16l-8.200-1.200z" fill="#fff" /></svg>
      </button>
      <label className="flex w-[344px] shrink-0 items-center bg-[#f2f2f2] pl-[10px] text-[#333]">
        <span className="size-5 rounded-full border-3 border-[#111]" />
        <input type="text" aria-label="搜索" placeholder="在这里输入你要搜索的内容" className="ml-[10px] w-0 flex-1 text-sm outline-none placeholder:text-[#333]" />
        <Mic className="mr-3 size-4.5" strokeWidth={1.5} />
      </label>
      <div className="flex shrink-0 items-center">
        <button type="button" aria-label="任务视图" className="flex w-12 justify-center">
          <svg viewBox="0 0 18 16" className="h-4 w-[18px]"><path d="M1 0v3h10V0M1 5.500h10v5H1zM1 16v-3h10v3M15.500 0v3M15.500 8v8M14.500 5.500h2" fill="none" stroke="#fff" strokeWidth="1.300" /></svg>
        </button>
        <button type="button" aria-label="浏览器" className="flex w-[52px] justify-center">
          <svg viewBox="0 0 22 22" className="size-[22px]">
            <g fill="#e8eaeb">
              <circle cx="6" cy="6" r="5.500" /><circle cx="16" cy="6" r="5.500" /><circle cx="6" cy="16" r="5.500" /><circle cx="16" cy="16" r="5.500" />
            </g>
            <path d="M11 11C7 9 6 5 9 1M11 11c2-4 6-5 10-2M11 11c4 2 5 6 2 10M11 11c-2 4-6 5-10 2" fill="none" stroke="#06161d" strokeWidth="1.300" />
          </svg>
        </button>
        <label className="flex h-[30px] w-[150px] items-center border border-[#777] bg-[#4a4a4a] px-1">
          <svg viewBox="0 0 20 20" className="size-5" aria-hidden="true">
            <path d="M16.500 13.500C14 19 4 18 4 10.500S16 2 16.500 10.500H5" fill="none" stroke="#3aa0ea" strokeWidth="3.200" />
            <path d="M1.500 18.500C-2 12 12 0 19 2" fill="none" stroke="#6cc3f7" strokeWidth="1.500" />
          </svg>
          <input type="text" aria-label="搜索网页和文件" placeholder="搜索网页和文件" className="ml-[2px] w-0 flex-1 outline-none placeholder:text-[#b5b5b5]" />
          <Search className="size-5 text-[#aaa]" strokeWidth={1.5} />
        </label>
        <button type="button" aria-label="通知" className="flex w-[53px] justify-center">
          <svg viewBox="0 0 28 26" className="h-[26px] w-7">
            <path d="M17 9C9 3 1 8 2 16s12 9 15 3-4-10-8-6 1 7 4 4M6 10c-3 6 1 11 6 10" fill="none" stroke="#ddd" strokeWidth="1.500" />
            <path d="M16 11c2-1 2-9 6-9s4 8 6 9zM20 12h4v1.500h-4z" fill="#e3a510" />
          </svg>
        </button>
      </div>
      <TaskIcon label="钢筋算量" active>
        <rect width="24" height="24" rx="4" fill="#1190f0" />
        <path d="M12 19V8c0-3 5-3 5 0M4 12.500h16M6 13c1 6 7 5 9 3" fill="none" stroke="#fff" strokeWidth="2" />
      </TaskIcon>
      <TaskIcon label="广联达">
        <path d="M24 2C19 6 9 4 7 12c-1 6 6 8 9 5 2-2 1-4-1-4-2 0-3 1-4 2-1-5 4-7 8-5 5 3 3 11-3 13C7 26 0 20 1 12 2 3 13-1 24 2z" fill="#2da0f2" />
      </TaskIcon>
      <TaskIcon label="记事">
        <rect width="24" height="24" rx="3" fill="#f39a1d" />
        <path d="M3 4h14v16H3z" fill="#fff8e2" />
        <path d="M5 8h9M5 11h8M5 14h6" stroke="#d08a3c" />
        <path d="M20 3 11 15l-1 4 4-2 8-12z" fill="#8a3d12" />
      </TaskIcon>
      <TaskIcon label="绿色工具">
        <rect width="24" height="24" rx="4" fill="#27bd62" />
        <path d="M7 5v14M5 5h4M5 19h4M7 12h11M18 9v6" stroke="#fff" strokeWidth="2.500" />
      </TaskIcon>
      <TaskIcon label="图书">
        <rect width="24" height="24" rx="3" fill="#2173d3" />
        <path d="M3 8q5-3 9 0 4-3 9 0v12q-5-2-9 0-4-2-9 0z" fill="#f4f2ec" />
        <circle cx="14" cy="9" r="5" fill="#bfe0f7" stroke="#e6eef5" />
        <path d="m17 13 4 5" stroke="#e0a336" strokeWidth="2.500" />
      </TaskIcon>
      <div className="flex w-[17px] shrink-0 flex-col items-center justify-between bg-[#f0f0f0] text-[#333]">
        <ChevronUp className="m-1 size-3" strokeWidth={3} />
        <span className="flex h-[17px] w-full items-center justify-center bg-[#d4d4d4]"><ChevronDown className="size-3" strokeWidth={3} /></span>
      </div>
      <div className="ml-auto flex items-center pr-1">
        <svg viewBox="0 0 16 16" className="mr-8 size-4" aria-hidden="true">
          <path d="M5 6.500a2.500 2.500 0 1 0 .1 0M1 16c0-5 8-5 8 0M11 1a2.500 2.500 0 1 0 .1 0M9 9c1-3 6-2 6 2" fill="none" stroke="#ddd" strokeWidth="1.300" />
        </svg>
        <div className="mr-[22px] w-12 text-center leading-[17px]">33%<br />CPU使用</div>
        <div className="flex items-center gap-[6px]">
          <ChevronUp className="size-4" strokeWidth={2} />
          <svg viewBox="0 0 18 16" className="h-4 w-[18px]" aria-hidden="true"><path d="M6 4h10v9H5M16 7h1.500v3M3 2v3M0 5h6v3q-3 3-6 0zM3 9v4" fill="none" stroke="#fff" strokeWidth="1.200" /></svg>
          <svg viewBox="0 0 16 16" className="size-4" aria-hidden="true"><path d="M3 14C3 8 8 3 14 3M6.500 14c0-4 3.500-7 7.500-7M10 14c0-2 2-4 4-4" fill="none" stroke="#ddd" strokeWidth="1.300" /><circle cx="13" cy="14" r="1.300" fill="#fff" /></svg>
          <svg viewBox="0 0 18 16" className="h-4 w-[18px]" aria-hidden="true"><path d="M1 5.500h3L7.500 2v12L4 10.500H1zM10 6q1 2 0 4M12.500 4q2.500 4 0 8M15 2q3.500 6 0 12" fill="none" stroke="#fff" strokeWidth="1.200" /></svg>
          <svg viewBox="0 0 24 14" className="h-[14px] w-6" aria-hidden="true"><path d="M1 1h22v12H1z" fill="none" stroke="#fff" strokeWidth="1.300" /><path d="M4 4h16M4 7h16" stroke="#fff" strokeWidth="1.500" strokeDasharray="1.500 1.500" /><path d="M6 10.500h12" stroke="#fff" /></svg>
          <span className="w-[18px] text-center text-[13px]">中</span>
          <SogouLogo className="mx-[6px] size-4" />
        </div>
        <div className="mr-[6px] ml-[2px] w-[74px] text-center leading-[18px]">16:13<br />2018/11/13</div>
        <svg viewBox="0 0 16 16" className="mr-[22px] ml-[6px] size-4" aria-hidden="true"><path d="M.7 1.500h14.600v10.500H10L7.500 15V12H.7z" fill="none" stroke="#fff" strokeWidth="1.200" /></svg>
      </div>
    </div>
  );
}

export default function App() {
  return (
    <div className="flex h-screen flex-col overflow-hidden bg-[#f0f0f0] font-['Open_Sans','Noto_Sans_CJK_SC',sans-serif] text-xs text-black">
      <TitleBar />
      <MenuBar />
      <MainToolbar />
      <div className="flex min-h-0 flex-1">
        <NavPanel />
        <div className="ml-1 flex min-w-0 flex-1 flex-col">
          <ComponentToolbar />
          <div className="flex min-h-0 flex-1">
            <ComponentTree />
            <PropertyPane />
          </div>
        </div>
      </div>
      <StatusBar />
      <Taskbar />
    </div>
  );
}
